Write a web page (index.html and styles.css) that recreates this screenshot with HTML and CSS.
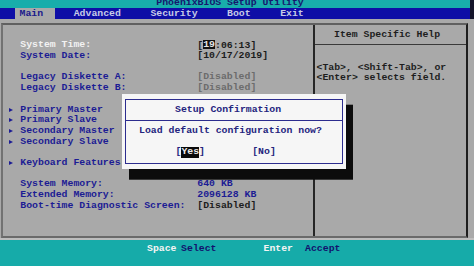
FILE: index.html
```html
<!DOCTYPE html>
<html lang="en">
<head>
    <meta charset="UTF-8">
    <meta name="viewport" content="width=device-width, initial-scale=1.0">
    <title>PhoenixBIOS Setup Utility</title>
    <link rel="stylesheet" href="styles.css">
</head>
<body>
    <div class="screen">
        <header class="titlebar"><span>PhoenixBIOS Setup Utility</span></header>

        <nav class="menubar">
            <span class="tab active">Main</span>
            <span class="tab">Advanced</span>
            <span class="tab">Security</span>
            <span class="tab">Boot</span>
            <span class="tab">Exit</span>
        </nav>

        <main class="workspace">
            <div class="frame">
                <section class="fields">
                    <div class="row"></div>
                    <div class="row current">
                        <span></span><span class="label">System Time:</span>
                        <span class="value">[<span class="cursor">19</span>:06:13]</span>
                    </div>
                    <div class="row">
                        <span></span><span class="label">System Date:</span>
                        <span class="value">[10/17/2019]</span>
                    </div>
                    <div class="row"></div>
                    <div class="row">
                        <span></span><span class="label">Legacy Diskette A:</span>
                        <span class="value off">[Disabled]</span>
                    </div>
                    <div class="row">
                        <span></span><span class="label">Legacy Diskette B:</span>
                        <span class="value off">[Disabled]</span>
                    </div>
                    <div class="row"></div>
                    <div class="row">
                        <span class="arrow"></span><span class="label">Primary Master</span>
                    </div>
                    <div class="row">
                        <span class="arrow"></span><span class="label">Primary Slave</span>
                    </div>
                    <div class="row">
                        <span class="arrow"></span><span class="label">Secondary Master</span>
                    </div>
                    <div class="row">
                        <span class="arrow"></span><span class="label">Secondary Slave</span>
                    </div>
                    <div class="row"></div>
                    <div class="row">
                        <span class="arrow"></span><span class="label">Keyboard Features</span>
                    </div>
                    <div class="row"></div>
                    <div class="row">
                        <span></span><span class="label">System Memory:</span>
                        <span class="value info">640 KB</span>
                    </div>
                    <div class="row">
                        <span></span><span class="label">Extended Memory:</span>
                        <span class="value info">2096128 KB</span>
                    </div>
                    <div class="row">
                        <span></span><span class="label">Boot-time Diagnostic Screen:</span>
                        <span class="value">[Disabled]</span>
                    </div>
                </section>

                <aside class="help">
                    <div class="help-title">Item Specific Help</div>
                    <p class="help-text">&lt;Tab&gt;, &lt;Shift-Tab&gt;, or &lt;Enter&gt; selects field.</p>
                </aside>
            </div>
        </main>

        <footer class="keybar">
            <span class="key">Space</span>
            <span class="action select">Select</span>
            <span class="key enter">Enter</span>
            <span class="action accept">Accept</span>
        </footer>

        <div class="dialog">
            <div class="dialog-box">
                <div class="dialog-title">Setup Confirmation</div>
                <div class="dialog-msg">Load default configuration now?</div>
                <div class="dialog-choices">
                    <span class="choice">[<span class="picked">Yes</span>]</span>
                    <span class="choice no">[No]</span>
                </div>
            </div>
        </div>
    </div>
</body>
</html>
```

FILE: styles.css
```css
* {
    box-sizing: border-box;
}
body {
    margin: 0;
    background: #14142a;
}
.screen {
    position: relative;
    width: 474px;
    height: 266px;
    overflow: hidden;
    background: #14142a;
    font-family: "Liberation Mono", "DejaVu Sans Mono", monospace;
    font-size: 9.83px;
    font-weight: bold;
    line-height: 10.7px;
    white-space: nowrap;
}

/* top title + menu */
.titlebar {
    height: 8px;
    margin-right: 4px;
    padding-left: 156.3px;
    overflow: hidden;
    background: #18adab;
    color: #16166e;
}
.titlebar span {
    display: block;
    margin-top: -1.6px;
}
.menubar {
    display: flex;
    height: 11px;
    margin-right: 4px;
    padding-left: 15px;
    background: #0e0ea6;
    line-height: 11px;
}
.tab {
    margin-right: 29.5px;
    color: #c6cae6;
}
.tab.active {
    padding: 0 12px 0 4.5px;
    margin-right: 18.6px;
    background: #a9a9a9;
    color: #1a1a8c;
}

/* main grey area */
.workspace {
    height: 221px;
    padding-top: 4px;
    background: #a9a9a9;
    border-bottom: 2px solid #bdbdbd;
}
.frame {
    display: flex;
    width: 467px;
    height: 215px;
    margin-left: 1px;
    border: 2px solid;
    border-color: #606060 #1e1e1e #6a6a6a #727272;
}
.fields {
    width: 310px;
    padding-top: 4.7px;
}
.row {
    display: grid;
    grid-template-columns: 17.3px 177px auto;
    height: 10.7px;
    color: #1c1c94;
}
.row.current .label {
    color: #f2f2f2;
}
.value {
    color: #1c1c1c;
}
.value.off {
    color: #6c6c6c;
}
.value.info {
    color: #1c1c94;
}
.cursor {
    display: inline-block;
    height: 9px;
    line-height: 9px;
    vertical-align: 1px;
    background: #111;
    color: #e6e6e6;
}
.arrow {
    width: 0;
    height: 0;
    margin: 3px 0 0 6px;
    border-left: 4.5px solid #1c1c94;
    border-top: 2.5px solid transparent;
    border-bottom: 2.5px solid transparent;
}

.help {
    flex: 1;
    border-left: 2px solid #262626;
    color: #1e1e1e;
}
.help-title {
    padding: 4.7px 0 4.1px 19px;
    border-bottom: 1px solid #3a3a3a;
}
.help-text {
    margin: 17.3px 0 0;
    padding-left: 1.5px;
    white-space: normal;
}

/* bottom key legend */
.keybar {
    display: flex;
    height: 26px;
    padding: 3.7px 0 0 147px;
    background: #16aba9;
}
.key {
    color: #f4f4f4;
}
.action {
    color: #12126e;
}
.select {
    margin-left: 4.6px;
}
.enter {
    margin-left: 47px;
}
.accept {
    margin-left: 12.1px;
}

/* confirmation popup */
.dialog {
    position: absolute;
    left: 122px;
    top: 94px;
    width: 224px;
    padding: 5px 3px 4.7px;
    background: #f6f6f6;
    box-shadow: 7px 10.7px 0 #0c0c0c;
    color: #24247e;
}
.dialog-box {
    border: 1px solid #2c2c8e;
}
.dialog-title {
    padding: 4.6px 0 4.7px 49px;
    border-bottom: 1px solid #2c2c8e;
}
.dialog-msg {
    padding: 4.9px 0 0 13px;
}
.dialog-choices {
    display: flex;
    margin-top: 10.7px;
    padding: 0 0 5px 49.5px;
}
.choice.no {
    margin-left: 47.2px;
}
.picked {
    display: inline-block;
    background: #0a0a0a;
    color: #ececec;
}
```
